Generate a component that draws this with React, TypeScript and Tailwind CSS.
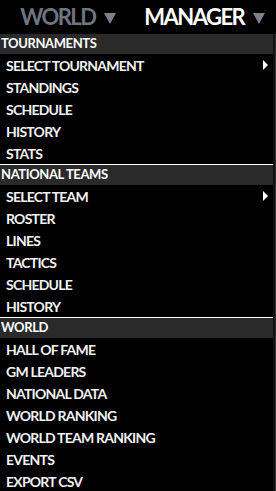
import { Fragment } from 'react'

const sections = [
  { title: 'TOURNAMENTS', items: ['SELECT TOURNAMENT', 'STANDINGS', 'SCHEDULE', 'HISTORY', 'STATS'], sub: [0] },
  { title: 'NATIONAL TEAMS', items: ['SELECT TEAM', 'ROSTER', 'LINES', 'TACTICS', 'SCHEDULE', 'HISTORY'], sub: [0] },
  { title: 'WORLD', items: ['HALL OF FAME', 'GM LEADERS', 'NATIONAL DATA', 'WORLD RANKING', 'WORLD TEAM RANKING', 'EVENTS', 'EXPORT CSV'], sub: [] as number[] },
]

function Caret() {
  return (
    <svg width="12" height="11" viewBox="0 0 12 11" className="ml-[9px] mt-[3px]">
      <polygon points="0,0 12,0 6,11" fill="#7b808a" />
    </svg>
  )
}

export default function App() {
  return (
    <div className="w-[276px] h-[491px] overflow-hidden bg-black flex text-[#f2f2f2]" style={{ fontFamily: 'Lato, "Open Sans", sans-serif' }}>
      <div className="w-[273px] flex flex-col">
        <div className="h-[34px] flex shrink-0">
          <button className="flex-1 flex items-center justify-center">
            <span className="text-[22px] font-bold text-[#6e7480] leading-none tracking-[-0.07em]">WORLD</span>
            <Caret />
          </button>
          <button className="flex-1 flex items-center justify-center">
            <span className="text-[22px] font-bold text-white leading-none tracking-[-0.07em]">MANAGER</span>
            <Caret />
          </button>
        </div>
        {sections.map((s, i) => (
          <Fragment key={s.title}>
            {i > 0 && <div className="h-px bg-white shrink-0" />}
            <div className="h-[20px] bg-[#2a2a2a] flex items-center pl-px text-[13px] font-bold text-white tracking-[-0.03em] shrink-0">{s.title}</div>
            {s.items.map((it, j) => (
              <div key={it} className="h-[22px] flex items-center justify-between pl-[6px] pr-[5px] text-[14px] font-bold tracking-[-0.055em] shrink-0">
                <span>{it}</span>
                {s.sub.includes(j) && (
                  <svg width="5" height="10" viewBox="0 0 5 10">
                    <polygon points="0,0 5,5 0,10" fill="#ffffff" />
                  </svg>
                )}
              </div>
            ))}
          </Fragment>
        ))}
      </div>
      <div className="w-[3px] flex flex-col">
        <div className="h-[34px] bg-black" />
        <div className="flex-1 bg-[#141414] border-r border-[#2e2e2e]" />
      </div>
    </div>
  )
}
